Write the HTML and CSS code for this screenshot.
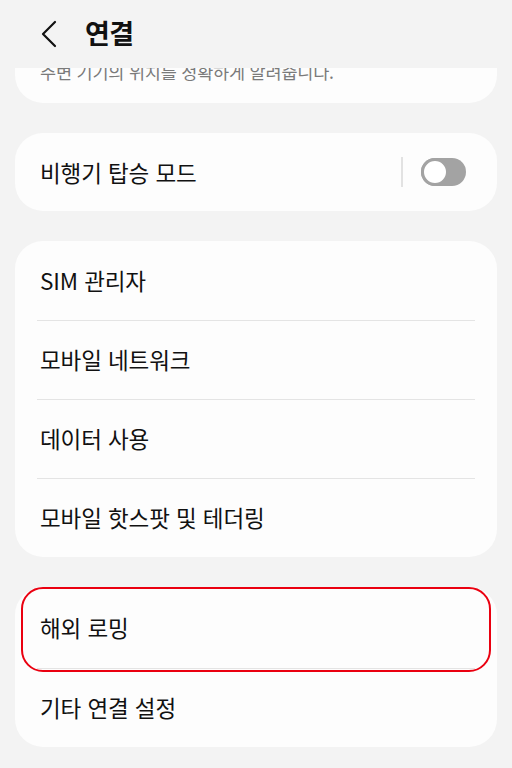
FILE: index.html
```html
<!doctype html>
<html lang="ko">
  <head>
    <meta charset="UTF-8" />
    <meta name="viewport" content="width=device-width, initial-scale=1.0" />
    <title>연결</title>
    <link rel="stylesheet" href="styles.css">
  </head>
  <body>
    <header class="top-bar">
      <button class="back-btn" aria-label="뒤로">
        <svg width="18" height="28" viewBox="0 0 18 28">
          <path d="M15 2 L3 14 L15 26" fill="none" stroke="#111" stroke-width="2.2" stroke-linecap="round" stroke-linejoin="round" />
        </svg>
      </button>
      <h1 class="titulo">연결</h1>
    </header>

    <main class="content">
      <section class="card card-cut">
        <p class="desc">주변 기기의 위치를 정확하게 알려줍니다.</p>
      </section>

      <section class="card card-single">
        <span class="label">비행기 탑승 모드</span>
        <div class="switch-area">
          <span class="v-divider"></span>
          <span class="switch"><span class="thumb"></span></span>
        </div>
      </section>

      <section class="card">
        <div class="row">SIM 관리자</div>
        <div class="row">모바일 네트워크</div>
        <div class="row">데이터 사용</div>
        <div class="row">모바일 핫스팟 및 테더링</div>
      </section>

      <section class="card card-marked">
        <div class="row row-first">해외 로밍</div>
        <div class="row">기타 연결 설정</div>
        <div class="highlight"></div>
      </section>
    </main>
  </body>
</html>
```

FILE: styles.css
```css
body {
  margin: 0;
  background-color: #f3f3f3;
  font-family: "Noto Sans CJK KR", "Noto Sans", sans-serif;
  color: #111;
}

.top-bar {
  display: flex;
  align-items: center;
  height: 68px;
  padding-left: 40px;
  box-sizing: border-box;
}

.back-btn {
  background: none;
  border: none;
  padding: 0;
  margin: 0 27px 0 0;
  display: flex;
}

.titulo {
  margin: -4px 0 0 0;
  font-size: 27px;
  font-weight: 700;
  letter-spacing: -0.5px;
}

.content {
  display: flex;
  flex-direction: column;
  gap: 30px;
  padding: 0 15px;
}

.card {
  background-color: #fdfdfd;
  border-radius: 28px;
  position: relative;
}

.card-cut {
  height: 35px;
  border-radius: 0 0 28px 28px;
  overflow: hidden;
}

.desc {
  margin: -9px 0 0 25px;
  font-size: 17.5px;
  color: #7a7a7a;
  letter-spacing: -0.2px;
}

.card-single {
  height: 78px;
  display: flex;
  align-items: center;
  justify-content: space-between;
  padding: 0 31px 0 25px;
}

.label,
.row {
  font-size: 22.5px;
  letter-spacing: -0.1px;
}

.switch-area {
  display: flex;
  align-items: center;
  gap: 18px;
}

.v-divider {
  width: 2px;
  height: 30px;
  background-color: #e2e2e2;
}

.switch {
  width: 45px;
  height: 28px;
  border-radius: 14px;
  background-color: #a3a3a3;
  display: flex;
  align-items: center;
}

.thumb {
  width: 22px;
  height: 22px;
  border-radius: 50%;
  background-color: #fff;
  border: 3px solid #a3a3a3;
}

.row {
  box-sizing: border-box;
  height: 79px;
  display: flex;
  align-items: center;
  margin: 0 22px;
  padding: 0 3px 2px;
  border-top: 1px solid #e4e4e4;
}

.row:first-child {
  border-top: none;
}

.card-marked .row-first {
  height: 81px;
}

.highlight {
  position: absolute;
  left: 6px;
  right: 6px;
  top: 0;
  height: 85px;
  box-sizing: border-box;
  border: 2px solid #ea0010;
  border-radius: 22px;
}
```
